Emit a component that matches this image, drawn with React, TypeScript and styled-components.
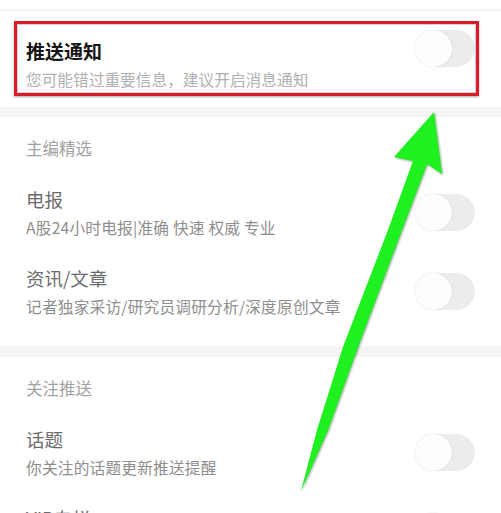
import React from "react";
import styled, { createGlobalStyle } from "styled-components";

const Global = createGlobalStyle`
  html, body { margin: 0; padding: 0; background: #ffffff; }
  body { font-family: "Noto Sans CJK SC", "Noto Sans", sans-serif; overflow: hidden; }
  * { box-sizing: border-box; }
`;

const Page = styled.div`
  position: relative;
  width: 501px;
  height: 513px;
  overflow: hidden;
  background: #fff;
`;

const TopSpace = styled.div`
  height: 9px;
  background: #fff;
`;

const Divider = styled.div<{ $h: number }>`
  height: ${(p) => p.$h}px;
  background: #f4f4f4;
`;

const Section = styled.section<{ $padBottom?: number }>`
  display: flex;
  flex-direction: column;
  padding-bottom: ${(p) => p.$padBottom ?? 0}px;
`;

const SectionHeader = styled.div`
  padding: 20px 26px 14px;
  font-size: 16.5px;
  line-height: 22px;
  color: #a2a2a2;
`;

const Row = styled.div<{ $padTop?: number; $padBottom?: number }>`
  position: relative;
  display: flex;
  align-items: center;
  justify-content: space-between;
  padding: ${(p) => p.$padTop ?? 13}px 26px ${(p) => p.$padBottom ?? 14}px;
`;

const TextBlock = styled.div`
  display: flex;
  flex-direction: column;
  gap: 6px;
`;

const Title = styled.div<{ $strong?: boolean }>`
  font-size: ${(p) => (p.$strong ? 19 : 18.5)}px;
  line-height: 26px;
  font-weight: ${(p) => (p.$strong ? 700 : 400)};
  color: ${(p) => (p.$strong ? "#151515" : "#6c6c6c")};
  white-space: nowrap;
`;

const Subtitle = styled.div<{ $light?: boolean }>`
  font-size: 15.7px;
  line-height: 20px;
  letter-spacing: ${(p) => (p.$light ? 0 : 0.2)}px;
  color: ${(p) => (p.$light ? "#b0b0b0" : "#8e8e8e")};
  white-space: nowrap;
`;

const SwitchTrack = styled.div<{ $offset?: number }>`
  position: relative;
  flex: none;
  width: 60px;
  height: 37px;
  border-radius: 19px;
  background: #ececec;
  align-self: ${(p) => (p.$offset !== undefined ? "flex-start" : "center")};
  margin-top: ${(p) => p.$offset ?? 0}px;
`;

const SwitchKnob = styled.div`
  position: absolute;
  left: 0;
  top: 0;
  width: 37px;
  height: 37px;
  border-radius: 50%;
  background: #fdfdfd;
  box-shadow: 0 0 2px rgba(0, 0, 0, 0.12);
`;

const Highlight = styled.div`
  position: absolute;
  left: 14px;
  top: 10px;
  width: 465px;
  height: 75px;
  border: 3px solid #d81c28;
  box-shadow: inset 0 0 0 1px rgba(120, 120, 120, 0.35), 0 1px 2px rgba(0, 0, 0, 0.35);
  pointer-events: none;
`;

const ArrowLayer = styled.svg`
  position: absolute;
  left: 0;
  top: 0;
  width: 501px;
  height: 513px;
  pointer-events: none;
  filter: drop-shadow(1px 1px 1px rgba(0, 70, 0, 0.45));
`;

const Switch: React.FC<{ offset?: number }> = ({ offset }) => (
  <SwitchTrack $offset={offset}>
    <SwitchKnob />
  </SwitchTrack>
);

type Item = { title: string; desc: string };

const featured: Item[] = [
  { title: "电报", desc: "A股24小时电报|准确 快速 权威 专业" },
  { title: "资讯/文章", desc: "记者独家采访/研究员调研分析/深度原创文章" },
];

const follow: Item[] = [
  { title: "话题", desc: "你关注的话题更新推送提醒" },
  { title: "VIP专栏", desc: "你订阅的专栏更新推送提醒" },
];

const SettingRow: React.FC<{ item: Item }> = ({ item }) => (
  <Row>
    <TextBlock>
      <Title>{item.title}</Title>
      <Subtitle>{item.desc}</Subtitle>
    </TextBlock>
    <Switch />
  </Row>
);

export default function App() {
  return (
    <>
      <Global />
      <Page>
        <TopSpace />
        <Divider $h={2} />
        <Section>
          <Row $padTop={27} $padBottom={17}>
            <TextBlock>
              <Title $strong>推送通知</Title>
              <Subtitle $light>您可能错过重要信息，建议开启消息通知</Subtitle>
            </TextBlock>
            <Switch offset={-8} />
            <Highlight />
          </Row>
        </Section>
        <Divider $h={10} />
        <Section $padBottom={15}>
          <SectionHeader>主编精选</SectionHeader>
          {featured.map((it) => (
            <SettingRow key={it.title} item={it} />
          ))}
        </Section>
        <Divider $h={11} />
        <Section>
          <SectionHeader>关注推送</SectionHeader>
          {follow.map((it) => (
            <SettingRow key={it.title} item={it} />
          ))}
        </Section>
        <ArrowLayer viewBox="0 0 501 513">
          <path
            d="M434 112 L442 174 L427 164 L402 230 L358 347 L328 430 L301 491 L317 430 L343 347 L388 230 L413 161 L394 157 Z"
            fill="#1ff01f"
          />
        </ArrowLayer>
      </Page>
    </>
  );
}
